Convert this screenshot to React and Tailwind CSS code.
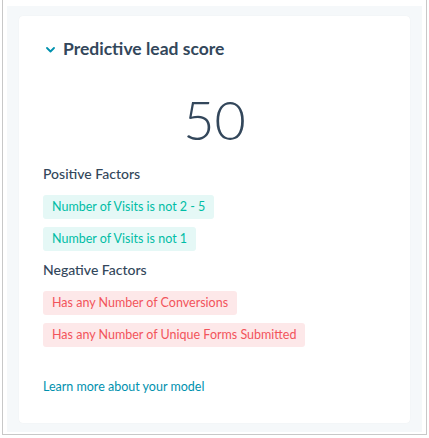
import React from 'react';

const positive = ['Number of Visits is not 2 - 5', 'Number of Visits is not 1'];
const negative = ['Has any Number of Conversions', 'Has any Number of Unique Forms Submitted'];

function Tag({ label, tone }) {
  const cls =
    tone === 'positive'
      ? 'bg-[#e5f8f6] text-[#00bda5]'
      : 'bg-[#fde8e9] text-[#f2545b]';
  return (
    <span className={`inline-flex items-center h-6 px-[9px] rounded-[3px] text-[12.5px] ${cls}`}>
      {label}
    </span>
  );
}

function FactorGroup({ title, items, tone }) {
  return (
    <div>
      <div className="h-5 leading-5 text-[14px] font-medium text-[#33475b]">{title}</div>
      <div className="mt-[11px] flex flex-col items-start gap-2">
        {items.map((item) => (
          <Tag key={item} label={item} tone={tone} />
        ))}
      </div>
    </div>
  );
}

export default function App() {
  return (
    <div className="w-[429px] h-[438px] bg-white" style={{ fontFamily: 'Lato, "Open Sans", sans-serif' }}>
      <div className="ml-[2px] w-[425px] h-[435px] border-x border-b border-[#c8c8c8] pt-[6px] px-[4px]">
        <div className="h-[426px] bg-[#f5f8fa] px-[12px] pt-[10px]">
          <div className="h-[407px] bg-white rounded-[4px] shadow-[0_0_1px_rgba(0,0,0,0.08)] pl-[24px] pr-[24px] pt-[21px]">
            <div className="flex items-center h-6">
              <svg width="9" height="6" viewBox="0 0 9 6" className="ml-[3px] mr-[8px] mt-[2px]">
                <path d="M1 1l3.5 3.5L8 1" fill="none" stroke="#0091ae" strokeWidth="1.8" strokeLinecap="round" strokeLinejoin="round" />
              </svg>
              <h2 className="text-[17.5px] font-bold text-[#33475b] leading-6">Predictive lead score</h2>
            </div>
            <div className="mt-[31px] h-[56px] leading-[56px] text-center text-[54px] font-light text-[#33475b]">
              50
            </div>
            <div className="mt-[16px]">
              <FactorGroup title="Positive Factors" items={positive} tone="positive" />
            </div>
            <div className="mt-[9px]">
              <FactorGroup title="Negative Factors" items={negative} tone="negative" />
            </div>
            <a href="#" className="block mt-[31px] h-[18px] leading-[18px] text-[12.5px] text-[#0091ae]">
              Learn more about your model
            </a>
          </div>
        </div>
      </div>
    </div>
  );
}
